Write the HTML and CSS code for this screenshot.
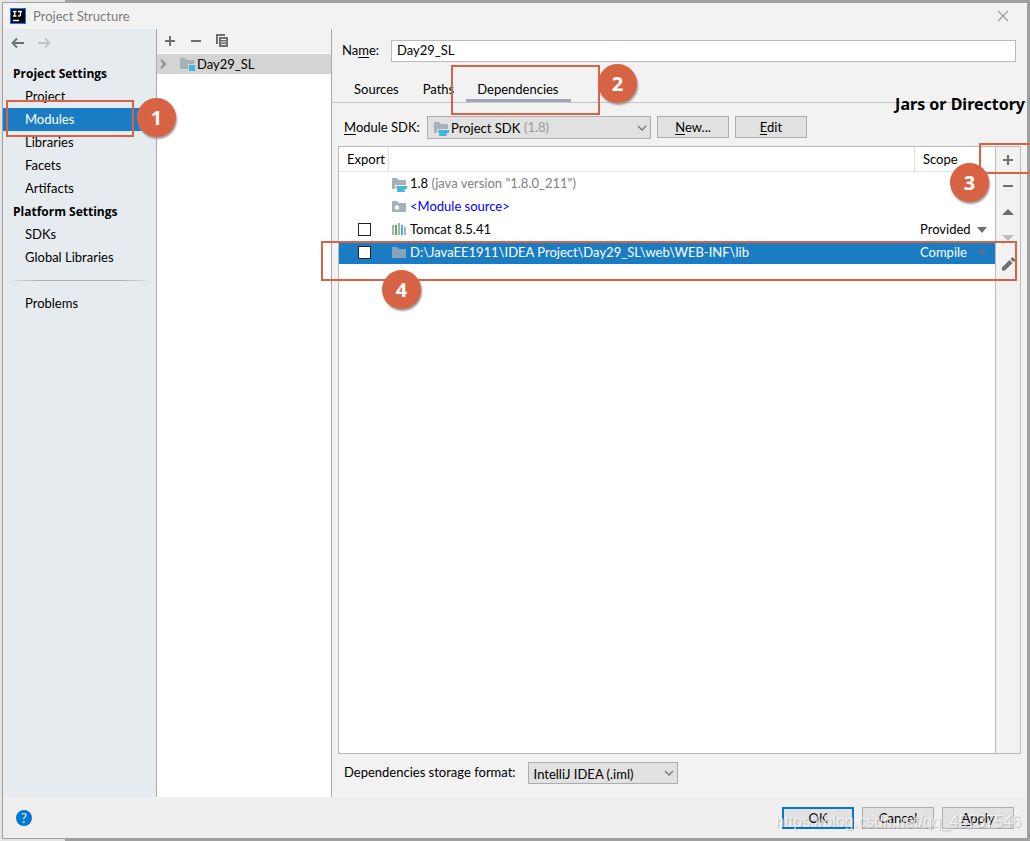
FILE: index.html
```html
<!DOCTYPE html>
<html lang="en">
<head>
<meta charset="utf-8">
<title>Project Structure</title>
<link rel="stylesheet" href="styles.css">
</head>
<body>
<svg class="defs" width="0" height="0" aria-hidden="true">
  <symbol id="folder" viewBox="0 0 16 16"><path fill="#a7b1b8" d="M1 2h5l2 2h7v9H1z"/></symbol>
  <symbol id="folder-sdk" viewBox="0 0 16 16"><path fill="#a7b1b8" d="M1 2h5l2 2h7v5H4v4H1z"/><path fill="#40b6e0" d="M5 10h11v3h-2q-.5 1-2 1.500h2V16H6v-1.500h1Q5 13 5 10z"/></symbol>
  <symbol id="chevron" viewBox="0 0 10 10"><path fill="none" stroke="#777" stroke-width="1.300" d="M1 3l4 4 4-4"/></symbol>
  <symbol id="plus" viewBox="0 0 16 16"><path fill="#6e6e6e" d="M7 3h2v4h4v2H9v4H7V9H3V7h4z"/></symbol>
  <symbol id="minus" viewBox="0 0 16 16"><path fill="#6e6e6e" d="M3 7h10v2H3z"/></symbol>
</svg>

<div class="window">
  <header class="titlebar">
    <svg class="logo" viewBox="0 0 16 16"><path fill="#087cfa" d="M0 0h16v16H0z"/><path d="M1 1h14v14H1z"/><path fill="none" stroke="#fff" stroke-width="1.300" d="M3 3.500h3.500M4.700 3.500v4.500M3 8h3.500M8 3.500h4M10.500 3.500v3.200q0 1.300-1.300 1.300H8M3 12.500h6"/></svg>
    <h1 class="title">Project Structure</h1>
    <button class="close" aria-label="Close"><svg viewBox="0 0 12 12"><path fill="none" stroke="#999" stroke-width="1.100" d="M1 1l10 10M11 1L1 11"/></svg></button>
  </header>

  <div class="content">
    <nav class="sidebar">
      <div class="history">
        <button aria-label="Back"><svg viewBox="0 0 16 16"><path fill="none" stroke="#6e6e6e" stroke-width="1.800" d="M15 8H4M8 3.500L3.500 8 8 12.500"/></svg></button>
        <button aria-label="Forward"><svg viewBox="0 0 16 16"><path fill="none" stroke="#c0c3c5" stroke-width="1.800" d="M2 8h11M9 3.500l4.500 4.500L9 12.500"/></svg></button>
      </div>
      <h2>Project Settings</h2>
      <a href="#">Project</a>
      <a href="#" class="current">Modules</a>
      <a href="#">Libraries</a>
      <a href="#">Facets</a>
      <a href="#">Artifacts</a>
      <h2>Platform Settings</h2>
      <a href="#">SDKs</a>
      <a href="#">Global Libraries</a>
      <hr>
      <a href="#">Problems</a>
    </nav>

    <section class="tree">
      <div class="tree-tools">
        <button aria-label="Add"><svg viewBox="0 0 16 16"><use href="#plus"/></svg></button>
        <button aria-label="Remove"><svg viewBox="0 0 16 16"><use href="#minus"/></svg></button>
        <button aria-label="Copy"><svg viewBox="0 0 16 16"><path fill="#6e6e6e" d="M2 1h9v2H4v8H2z"/><path fill="#6e6e6e" fill-rule="evenodd" d="M5 4h9v10H5zM7 6v1h5V6zM7 8.500v1h5v-1zM7 11v1h5v-1z"/></svg></button>
      </div>
      <div class="tree-row">
        <svg class="arrow" viewBox="0 0 10 10"><path fill="none" stroke="#888" stroke-width="1.800" d="M2 1l4 4-4 4"/></svg>
        <svg viewBox="0 0 16 16"><path fill="#a7b1b8" d="M1 2h5l2 2h7v4H9v5H1z"/><path fill="#40b6e0" d="M10 9h6v6h-6z"/></svg>
        <span>Day29_SL</span>
      </div>
    </section>

    <main class="editor">
      <div class="name-row">
        <label for="name">Na<u>m</u>e:</label>
        <input id="name" type="text" value="Day29_SL">
      </div>
      <div class="tabs" role="tablist">
        <button role="tab">Sources</button>
        <button role="tab">Paths</button>
        <button role="tab" class="active" aria-selected="true">Dependencies</button>
      </div>
      <div class="sdk-row">
        <label for="sdk"><u>M</u>odule SDK:</label>
        <div class="combo sdk">
          <select id="sdk"><option>Project SDK</option></select>
          <svg class="lead" viewBox="0 0 16 16"><use href="#folder-sdk"/></svg>
          <span class="note">(1.8)</span>
          <svg class="chev" viewBox="0 0 10 10"><use href="#chevron"/></svg>
        </div>
        <button class="btn"><u>N</u>ew...</button>
        <button class="btn edit"><u>E</u>dit</button>
      </div>

      <div class="panel">
        <div class="table-area">
          <table>
            <thead><tr><th class="c-export">Export</th><th></th><th class="c-scope">Scope</th></tr></thead>
            <tbody>
              <tr><td></td><td><div class="entry"><svg viewBox="0 0 16 16"><use href="#folder-sdk"/></svg><span>1.8 <span class="muted">(java version "1.8.0_211")</span></span></div></td><td></td></tr>
              <tr><td></td><td><div class="entry source"><svg viewBox="0 0 16 16"><use href="#folder"/><circle cx="6" cy="8.500" r="2.200" fill="#fff"/></svg><span>&lt;Module source&gt;</span></div></td><td></td></tr>
              <tr><td class="check"><input type="checkbox" aria-label="Export Tomcat 8.5.41"></td><td><div class="entry"><svg viewBox="0 0 16 16"><path fill="#a7b1b8" d="M1 3h2v10H1zM7 1h2v12H7zM13 5h2v8h-2z"/><path fill="#62b543" d="M4 3h2v10H4z"/><path fill="#40b6e0" d="M10 3h2v10h-2z"/></svg><span>Tomcat 8.5.41</span></div></td><td><button class="scope">Provided<svg viewBox="0 0 10 6"><path fill="#6e6e6e" d="M0 0h10L5 6z"/></svg></button></td></tr>
              <tr class="selected"><td class="check"><input type="checkbox" aria-label="Export lib directory"></td><td><div class="entry"><svg class="dim" viewBox="0 0 16 16"><use href="#folder"/></svg><span>D:\JavaEE1911\IDEA Project\Day29_SL\web\WEB-INF\lib</span></div></td><td><button class="scope">Compile<svg viewBox="0 0 10 6"><path fill="#566f85" d="M0 0h10L5 6z"/></svg></button></td></tr>
            </tbody>
          </table>
        </div>
        <div class="side-tools">
          <button aria-label="Add dependency"><svg viewBox="0 0 16 16"><use href="#plus"/></svg></button>
          <button aria-label="Remove dependency"><svg viewBox="0 0 16 16"><use href="#minus"/></svg></button>
          <button aria-label="Move up"><svg viewBox="0 0 16 16"><path fill="#6e6e6e" d="M2 11l6-6 6 6z"/></svg></button>
          <button aria-label="Move down"><svg viewBox="0 0 16 16"><path fill="#bdbdbd" d="M2 5l6 6 6-6z"/></svg></button>
          <button aria-label="Edit dependency"><svg viewBox="0 0 16 16"><path fill="#6e6e6e" d="M2 11.500L9.500 4l3 3L5 14.500H2zM10.500 3l1.500-1.500q.5-.5 1 0l2 2q.5.5 0 1L13.500 6z"/></svg></button>
        </div>
      </div>

      <div class="format-row">
        <label for="format">Dependencies storage format:</label>
        <div class="combo format">
          <select id="format"><option>IntelliJ IDEA (.iml)</option></select>
          <svg class="chev" viewBox="0 0 10 10"><use href="#chevron"/></svg>
        </div>
      </div>
    </main>
  </div>

  <footer class="footer">
    <button class="help" aria-label="Help">?</button>
    <button class="btn primary">OK</button>
    <button class="btn">Cancel</button>
    <button class="btn"><u>A</u>pply</button>
  </footer>
</div>

<div class="notes">
  <div class="box box-1"></div><div class="pin pin-1">1</div>
  <div class="box box-2"></div><div class="pin pin-2">2</div>
  <div class="box box-3"></div><div class="pin pin-3">3</div>
  <div class="box box-4"></div><div class="pin pin-4">4</div>
  <div class="caption">Jars or Directory</div>
  <div class="watermark">https://blog.csdn.net/qq_45737546</div>
</div>
</body>
</html>
```
FILE: styles.css
```css
* { box-sizing: border-box; }
body {
  margin: 0;
  min-height: 100vh;
  padding: 2px;
  display: flex;
  position: relative;
  overflow: hidden;
  background: linear-gradient(to right, #e4e4e4 65px, #a0a0a0 65px);
  font: 13px/23px Lato, "Open Sans", sans-serif;
  color: #000;
}
.defs { position: absolute; }
button, input, select { font: inherit; color: inherit; }
button { padding: 0; border: 0; background: none; }
svg { width: 16px; height: 16px; flex: none; display: block; }
h1, h2 { margin: 0; font-size: 13px; }
u { text-underline-offset: 2px; }

.window {
  flex: 1;
  display: flex;
  flex-direction: column;
  border: 1px solid #a0a0a0;
  background: #f2f2f2;
}
.titlebar { display: flex; align-items: center; gap: 7px; height: 26px; padding: 0 18px 0 7px; }
.title { flex: 1; font-weight: 400; line-height: 22px; color: #7b7b7b; }
.close svg { width: 12px; height: 12px; }
.content { flex: 1; display: flex; }

.sidebar { width: 154px; border-right: 1px solid #a6a9ab; background: #e6ebef; display: flex; flex-direction: column; }
.history { display: flex; gap: 11px; height: 33px; padding: 6px 6px; }
.history button { height: 16px; }
.sidebar h2 { padding-left: 10px; font: bold 12px/23px "Open Sans", sans-serif; }
.sidebar a { padding-left: 22px; color: inherit; text-decoration: none; }
.sidebar .current { background: #1a7dc4; color: #fff; }
.sidebar hr {
  width: 142px; height: 1px; margin: 11px 6px; border: 0;
  background: linear-gradient(to right, transparent, #aaaeb1 20%, #aaaeb1 80%, transparent);
}

.tree { width: 175px; border-right: 1px solid #a9a9a9; background: #fff; }
.tree-tools { display: flex; gap: 10px; align-items: center; height: 24px; padding-left: 5px; background: #f2f2f2; }
.tree-row { display: flex; align-items: center; height: 20px; margin-top: 1px; padding-left: 2px; background: #d4d4d4; }
.tree-row .arrow { width: 10px; height: 10px; margin-right: 10px; }
.tree-row span { padding-left: 2px; line-height: 20px; }

.editor { flex: 1; min-width: 0; display: flex; flex-direction: column; padding-top: 10px; }
.name-row { display: flex; align-items: center; padding: 0 11px 0 10px; }
.name-row label { width: 49px; }
.name-row input { flex: 1; min-width: 0; height: 22px; padding: 0 5px; border: 1px solid #bababa; background: #fff; }
.tabs { display: flex; height: 41px; padding: 12px 10px 0; border-bottom: 1px solid #c6c6c6; }
.tabs button { padding: 4px 12px 0; border-bottom: 3px solid transparent; }
.tabs .active { padding: 4px 12px 0 11px; border-color: #9ba7b8; }
.sdk-row { display: flex; align-items: flex-start; gap: 6px; padding: 13px 12px 7px; }
.sdk-row label { width: 77px; }

.btn { min-width: 72px; height: 22px; border: 1px solid #adadad; background: #e1e1e1; line-height: 20px; }
.btn.primary { border: 2px solid #0078d7; line-height: 18px; }
.combo { display: grid; align-items: center; }
.combo > * { grid-area: 1 / 1; }
.combo select {
  appearance: none; width: 100%; height: 22px; padding: 0 5px;
  border: 1px solid #adadad; border-radius: 0; background: #e1e1e1;
}
.combo svg, .combo span { pointer-events: none; z-index: 1; }
.combo .chev { justify-self: end; width: 10px; height: 10px; margin-right: 4px; }
.sdk { width: 224px; }
.sdk select { height: 23px; padding-left: 23px; }
.sdk .lead { margin-left: 6px; }
.sdk .note { margin-left: 97px; color: #999; }

.panel { flex: 1; display: flex; margin: 0 6px; border: 1px solid #bababa; }
.table-area { flex: 1; min-width: 0; background: #fff; border-right: 1px solid #bababa; }
table { width: 100%; table-layout: fixed; border-collapse: separate; border-spacing: 0; }
th { height: 25px; padding: 0 8px; border-bottom: 1px solid #e2e2e2; font-weight: 400; text-align: left; }
th + th { border-left: 1px solid #e2e2e2; }
.c-export { width: 49px; }
.c-scope { width: 81px; }
td { height: 23px; padding: 0; }
.entry { display: flex; align-items: center; gap: 3px; padding-left: 3px; }
.muted { color: #808080; }
.source { color: #0000ff; }
.dim { opacity: .75; }
.check input { appearance: none; display: block; width: 13px; height: 13px; margin: 0 19px; border: 1px solid #222; background: #fff; }
.scope { display: flex; align-items: center; justify-content: space-between; width: 100%; padding: 0 8px 0 6px; }
.scope svg { width: 10px; height: 6px; }
.selected td { background: #1a7dc4; color: #fff; }
.side-tools { width: 24px; display: flex; flex-direction: column; gap: 10px; align-items: center; padding-top: 5px; }

.format-row { display: flex; align-items: center; gap: 12px; padding: 7px 12px 13px; }
.format { width: 150px; }

.footer { display: flex; align-items: center; gap: 8px; height: 41px; padding: 0 13px; background: #efefef; }
.help { width: 16px; height: 16px; margin-right: auto; border-radius: 50%; background: #0078d7; color: #fff; line-height: 16px; }

/* Numbered callouts drawn over the dialog */
.notes { position: absolute; inset: 0; pointer-events: none; }
.box, .pin, .caption, .watermark { position: absolute; }
.box { border: 2px solid #d86344; }
.pin {
  width: 39px; height: 39px; border-radius: 50%;
  background: #d86344; color: #fff; box-shadow: 1px 2px 2px #999;
  font: bold 20px/39px "Open Sans", sans-serif; text-align: center;
}
.box-1 { left: 6px; top: 100px; width: 128px; height: 37px; }
.pin-1 { left: 137px; top: 98px; }
.box-2 { left: 451px; top: 65px; width: 149px; height: 50px; }
.pin-2 { left: 598px; top: 64px; }
.box-3 { left: 979px; top: 143px; width: 53px; height: 31px; }
.pin-3 { left: 950px; top: 163px; }
.box-4 { left: 321px; top: 241px; width: 696px; height: 40px; }
.pin-4 { left: 382px; top: 270px; }
.caption { right: 5px; top: 92px; font: bold 16px/24px "Noto Sans", sans-serif; }
.watermark { right: 9px; top: 811px; font: 16px/22px "Liberation Sans", sans-serif; color: #ffffffb0; text-shadow: 1px 1px 1px #0003; }
```
